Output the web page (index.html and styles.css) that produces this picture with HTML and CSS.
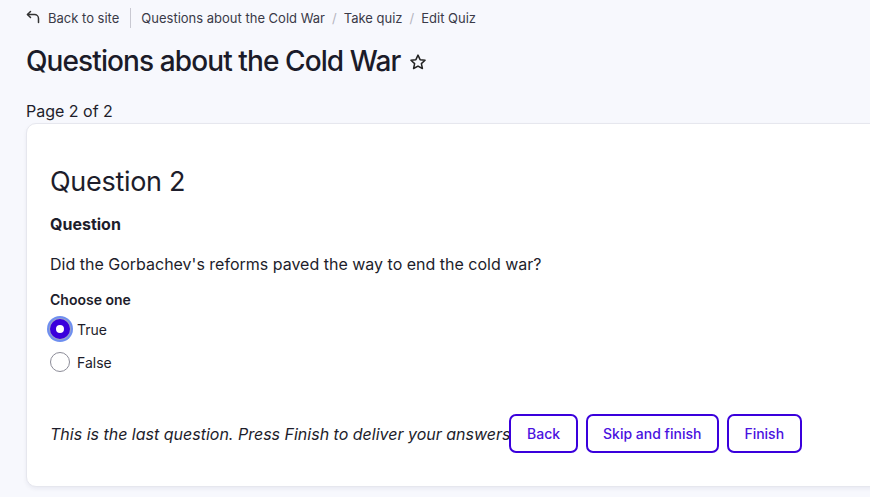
FILE: index.html
```html
<!DOCTYPE html>
<html lang="en">
<head>
<meta charset="utf-8">
<title>Questions about the Cold War</title>
<link rel="stylesheet" href="styles.css">
</head>
<body>
<div class="page">
  <nav class="crumbs">
    <a class="back" href="#">
      <svg class="back-icon" width="14" height="14" viewBox="0 0 14 14" fill="none" stroke="#333" stroke-width="1.5" stroke-linecap="round" stroke-linejoin="round"><path d="M4.5 1.5 L1.5 4.5 L4.5 7.5"/><path d="M1.5 4.5 H8.5 A4 4 0 0 1 12.5 8.5 V12.5"/></svg>
      <span>Back to site</span>
    </a>
    <span class="vsep"></span>
    <a href="#">Questions about the Cold War</a>
    <span class="slash">/</span>
    <a href="#">Take quiz</a>
    <span class="slash">/</span>
    <a href="#">Edit Quiz</a>
  </nav>
  <h1 class="title">Questions about the Cold War
    <svg class="star" width="18" height="18" viewBox="0 0 24 24" fill="none" stroke="#222" stroke-width="2" stroke-linejoin="round"><path d="M12 2.8 L14.8 8.9 L21.4 9.6 L16.5 14.1 L17.9 20.7 L12 17.4 L6.1 20.7 L7.5 14.1 L2.6 9.6 L9.2 8.9 Z"/></svg>
  </h1>
  <div class="pageno">Page 2 of 2</div>
  <section class="card">
    <h2 class="qtitle">Question 2</h2>
    <h3 class="qlabel">Question</h3>
    <p class="qtext">Did the Gorbachev's reforms paved the way to end the cold war?</p>
    <div class="choose">Choose one</div>
    <label class="opt"><span class="radio checked"></span>True</label>
    <label class="opt"><span class="radio"></span>False</label>
    <div class="footer">
      <em class="note">This is the last question. Press Finish to deliver your answers</em>
      <button class="btn">Back</button>
      <button class="btn">Skip and finish</button>
      <button class="btn">Finish</button>
    </div>
  </section>
</div>
</body>
</html>
```
FILE: styles.css
```css
html, body {
  margin: 0;
  padding: 0;
}
body {
  background: #f7f8fd;
  font-family: Inter, "Noto Sans", sans-serif;
  color: #1d1d2b;
  width: 870px;
  height: 497px;
  overflow: hidden;
}
.page {
  padding: 0 0 0 26px;
}
.crumbs {
  display: flex;
  align-items: center;
  height: 36px;
  font-size: 13px;
  color: #3a3a48;
}
.crumbs a {
  color: #3a3a48;
  text-decoration: none;
}
.back {
  display: flex;
  align-items: center;
  gap: 8px;
}
.back-icon {
  margin-top: -3px;
}
.vsep {
  width: 1px;
  height: 20px;
  background: #c9c9d2;
  margin: 0 10px 0 11px;
}
.slash {
  color: #b5b5c0;
  margin: 0 7px;
}
.title {
  margin: 7px 0 0 0;
  font-size: 28px;
  font-weight: 500;
  letter-spacing: -0.9px;
  line-height: 36px;
  display: flex;
  align-items: center;
  gap: 9px;
  color: #1b1b29;
}
.star {
  margin-top: 2px;
}
.pageno {
  margin-top: 22px;
  font-size: 16px;
  line-height: 20px;
  color: #1d1d2b;
}
.card {
  margin-top: 2px;
  width: 880px;
  height: 364px;
  box-sizing: border-box;
  background: #fff;
  border: 1px solid #e6e7ee;
  border-radius: 10px;
  box-shadow: 0 2px 4px rgba(20, 20, 60, 0.06);
  padding: 41px 0 0 23px;
}
.qtitle {
  margin: 0;
  font-size: 27px;
  font-weight: 400;
  line-height: 34px;
  letter-spacing: -0.3px;
  color: #1d1d2b;
}
.qlabel {
  margin: 15px 0 0 0;
  font-size: 16px;
  font-weight: 700;
  line-height: 20px;
}
.qtext {
  margin: 20px 0 0 0;
  font-size: 16px;
  line-height: 20px;
}
.choose {
  margin-top: 16px;
  font-size: 14px;
  font-weight: 600;
  line-height: 20px;
}
.opt {
  display: flex;
  align-items: center;
  gap: 7px;
  font-size: 14px;
  height: 22px;
  margin-top: 8px;
}
.opt + .opt {
  margin-top: 11px;
}
.radio {
  width: 20px;
  height: 20px;
  box-sizing: border-box;
  border-radius: 50%;
  border: 1px solid #8c8c98;
  background: #fff;
  flex: none;
}
.radio.checked {
  border: 6px solid #3a00dc;
  box-shadow: 0 0 0 1px #9aa0c8, 0 0 0 3px #6e8ff0;
}
.footer {
  display: flex;
  align-items: center;
  gap: 8px;
  margin-top: 41px;
}
.note {
  font-size: 16px;
  font-style: italic;
  margin-right: -9px;
}
.btn {
  height: 39px;
  padding: 0 15.5px;
  background: #fff;
  border: 2px solid #3a00dc;
  border-radius: 7px;
  color: #4a12e0;
  font-family: Inter, "Noto Sans", sans-serif;
  font-size: 14px;
  font-weight: 500;
}
```
